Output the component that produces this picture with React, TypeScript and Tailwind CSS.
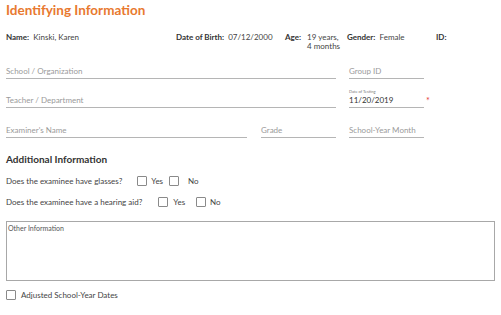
import React from 'react';

const Field: React.FC<{ label: string; className: string }> = ({ label, className }) => (
  <div className={`border-b border-[#b5b5b5] pb-[2px] text-[8px] leading-[10px] text-[#9a9a9a] ${className}`}>
    {label}
  </div>
);

const Box: React.FC = () => (
  <span className="inline-block w-[10px] h-[10px] border border-[#8a8a8a] bg-white rounded-[1px]" />
);

export default function App() {
  return (
    <div className="w-[501px] h-[315px] bg-white px-[6px] pt-[3px] text-[#444]" style={{ fontFamily: 'Lato, "Noto Sans", sans-serif' }}>
      <h1 className="text-[13.5px] leading-[15px] font-bold text-[#e8792f]">Identifying Information</h1>

      <div className="flex mt-[15px] text-[8px] leading-[9px]">
        <div className="w-[170px]"><b className="font-bold text-[#333]">Name:</b>&nbsp; Kinski, Karen</div>
        <div className="w-[109px]"><b className="font-bold text-[#333]">Date of Birth:</b>&nbsp; 07/12/2000</div>
        <div className="w-[62px] flex">
          <b className="font-bold text-[#333]">Age:</b>
          <span className="ml-[6px]">19 years,<br />4 months</span>
        </div>
        <div className="w-[89px]"><b className="font-bold text-[#333]">Gender:</b>&nbsp; Female</div>
        <div><b className="font-bold text-[#333]">ID:</b></div>
      </div>

      <div className="flex items-end gap-[13px] mt-[15px]">
        <Field label="School / Organization" className="w-[330px]" />
        <Field label="Group ID" className="w-[75px]" />
      </div>

      <div className="flex items-end gap-[13px] mt-[10px]">
        <Field label="Teacher / Department" className="w-[330px]" />
        <div className="w-[75px] border-b border-[#b5b5b5] pb-[1px]">
          <div className="text-[4px] leading-[6px] text-[#777]">Date of Testing</div>
          <div className="text-[8px] leading-[11px] text-[#333]">11/20/2019</div>
        </div>
        <span className="text-[#e53935] text-[9px] leading-[9px] -ml-[11px] mb-[3px]">*</span>
      </div>

      <div className="flex items-end mt-[17px]">
        <Field label="Examiner's Name" className="w-[241px]" />
        <Field label="Grade" className="w-[75px] ml-[14px]" />
        <Field label="School-Year Month" className="w-[75px] ml-[13px]" />
      </div>

      <h2 className="mt-[15px] text-[10px] leading-[12px] font-bold text-[#333]">Additional Information</h2>

      <div className="flex items-center mt-[11px] text-[8px] leading-[10px]">
        <span>Does the examinee have glasses?</span>
        <span className="ml-[15px] flex"><Box /></span>
        <span className="ml-[4px]">Yes</span>
        <span className="ml-[6px] flex"><Box /></span>
        <span className="ml-[9px]">No</span>
      </div>

      <div className="flex items-center mt-[11px] text-[8px] leading-[10px]">
        <span>Does the examinee have a hearing aid?</span>
        <span className="ml-[16px] flex"><Box /></span>
        <span className="ml-[5px]">Yes</span>
        <span className="ml-[11px] flex"><Box /></span>
        <span className="ml-[4px]">No</span>
      </div>

      <div className="mt-[14px] w-[489px] h-[60px] border border-[#a8a8a8] px-[1px] pt-[2px] text-[7px] leading-[9px] text-[#555]">
        Other Information
      </div>

      <div className="flex items-center mt-[9px] text-[8px] leading-[10px]">
        <Box />
        <span className="ml-[5px]">Adjusted School-Year Dates</span>
      </div>
    </div>
  );
}
